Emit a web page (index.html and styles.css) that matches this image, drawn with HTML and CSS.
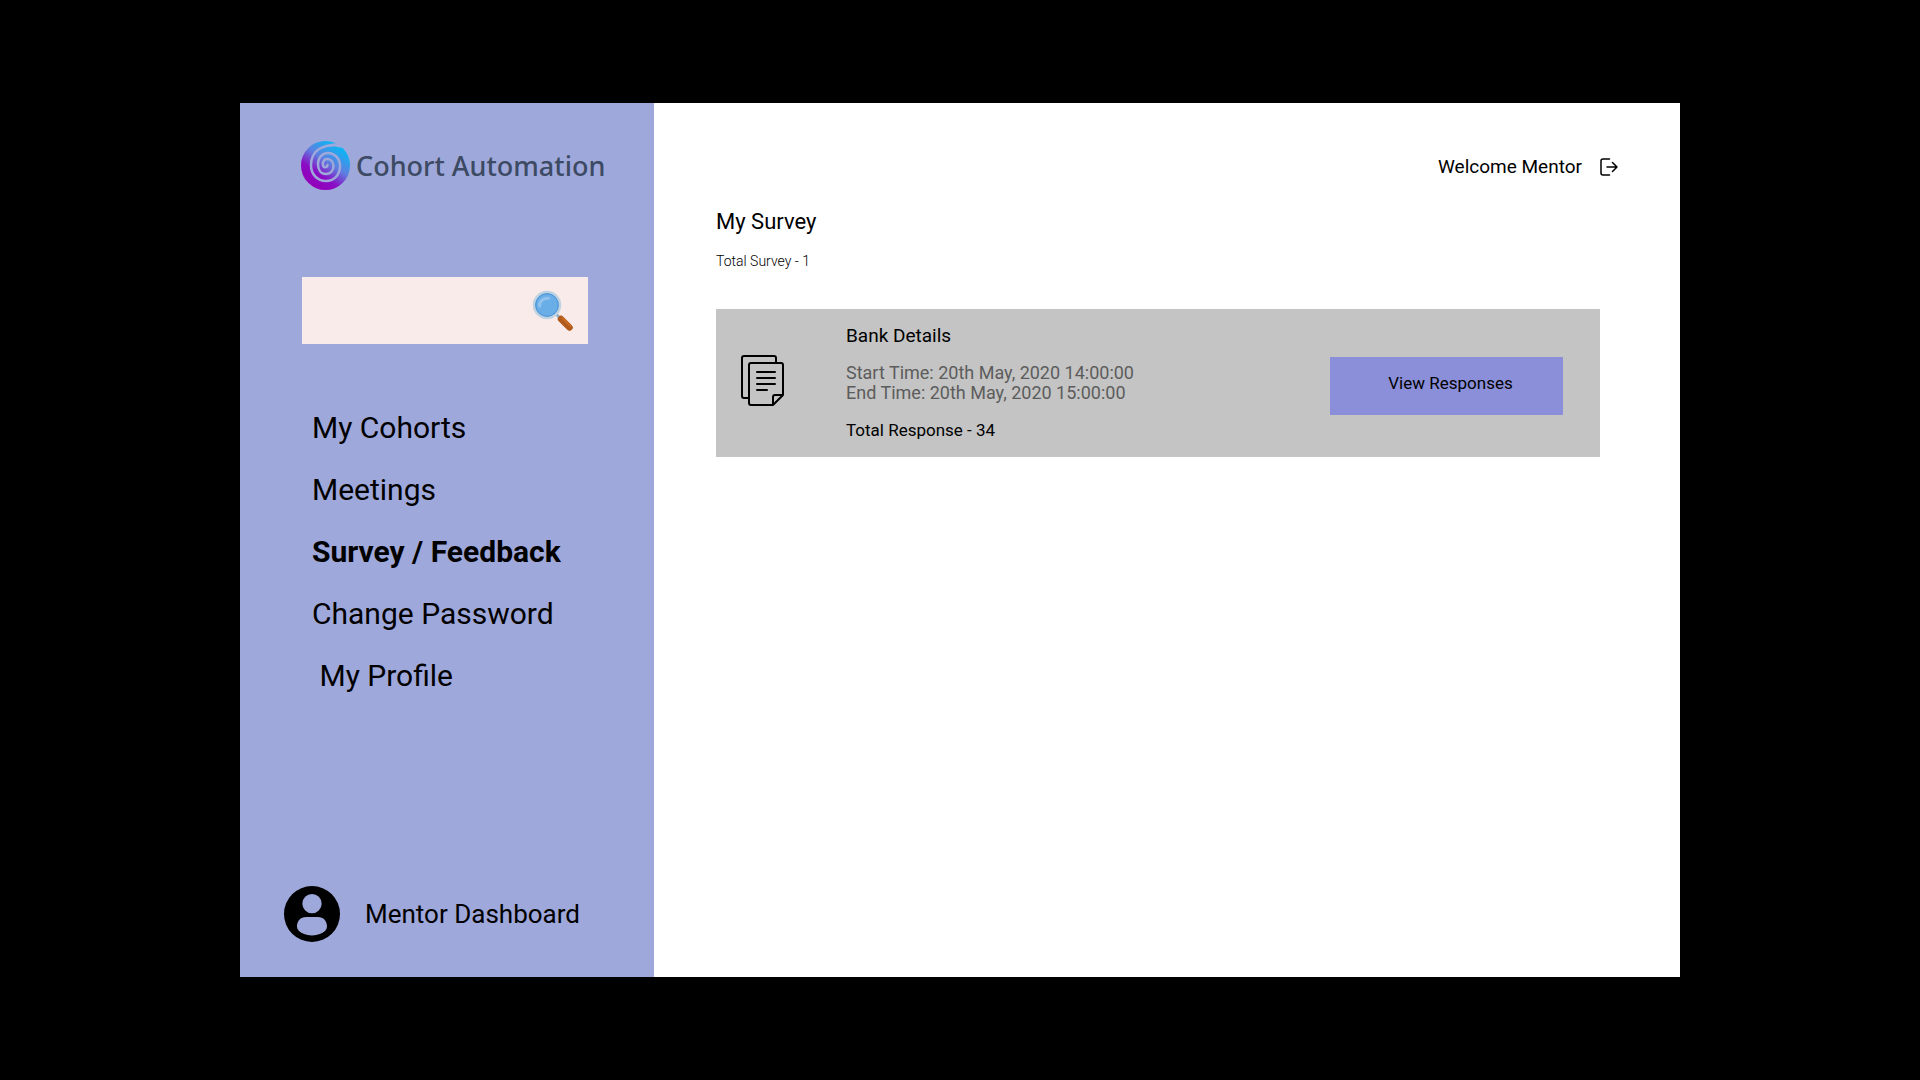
FILE: index.html
```html
<!DOCTYPE html>
<html lang="en">
<head>
<meta charset="utf-8">
<meta name="viewport" content="width=device-width, initial-scale=1">
<title>Cohort Automation - My Survey</title>
<link rel="stylesheet" href="styles.css">
</head>
<body>
<div class="app">
  <aside class="sidebar">
    <div class="brand">
      <svg class="brand-mark" viewBox="0 0 49 49" aria-hidden="true">
        <defs>
          <linearGradient id="swirl" x1="0.25" y1="0.95" x2="0.8" y2="0.15">
            <stop offset="0" stop-color="#9400b8"/>
            <stop offset="0.3" stop-color="#8a0cc4"/>
            <stop offset="0.62" stop-color="#5f7fe0"/>
            <stop offset="1" stop-color="#0cb4f4"/>
          </linearGradient>
        </defs>
        <circle cx="24.500" cy="24.500" r="24.500" fill="url(#swirl)"/>
        <path class="brand-notch" d="M33 1 C36 2 38 3 49 12 V-2 H33 Z M38 2.500 C33 3.500 29 4 26 6 C32 5 36 5.500 41 7 Z"/>
        <path class="brand-groove" d="M38 3 C30 4 24 4 18 8 C12 12 10 18 10 24 C10 33 16 40 25 40 C34 40 39 33 39 25 C39 17 33 12 27 12 C21 12 17 17 17 23 C17 29 20 33 25 33 C30 33 32.500 29 32.500 25 C32.500 20 29 18 26 18 C23 18 21.500 21 22 24 C22.500 27 26 27 26.500 24"/>
      </svg>
      <span class="brand-name">Cohort Automation</span>
    </div>
    <form class="search" role="search">
      <input class="search-input" type="search" aria-label="Search">
      <button class="search-button" type="button" aria-label="Search">
        <svg viewBox="0 0 44 44" aria-hidden="true">
          <path d="M24 24 L30 30" stroke="#8fb0c8" stroke-width="3"/>
          <path d="M30 30 L38.500 38.500" stroke="#b05a1c" stroke-width="6.500" stroke-linecap="round"/>
          <path d="M31.500 29 L39.500 37" stroke="#c8691f" stroke-width="2" stroke-linecap="round"/>
          <circle cx="16" cy="16" r="13" fill="#6aaee8" stroke="#bfd2e0" stroke-width="2.500"/>
          <circle cx="16" cy="16" r="11.300" fill="none" stroke="#4d93d6" stroke-width="1"/>
          <path d="M8.500 17 C8.500 12 12 8.800 17.500 9.200" fill="none" stroke="#92c3ee" stroke-width="3" stroke-linecap="round"/>
        </svg>
      </button>
    </form>
    <nav class="menu" aria-label="Main">
      <a class="menu-link" href="#cohorts">My Cohorts</a>
      <a class="menu-link" href="#meetings">Meetings</a>
      <a class="menu-link menu-link-active" href="#survey" aria-current="page">Survey / Feedback</a>
      <a class="menu-link" href="#password">Change Password</a>
      <a class="menu-link" href="#profile">&nbsp;My Profile</a>
    </nav>
    <div class="account">
      <svg class="avatar" viewBox="0 0 56 56" aria-hidden="true">
        <path fill-rule="evenodd" d="M28 0 A28 28 0 1 0 28 56 A28 28 0 1 0 28 0 Z M28 8 A9.500 9.500 0 1 1 28 27.300 A9.500 9.500 0 1 1 28 8 Z M22 31 H34 C39.500 31 43 35 43 40.500 C43 46 35 49.500 28 49.500 C21 49.500 13 46 13 40.500 C13 35 16.500 31 22 31 Z"/>
      </svg>
      <span class="account-name">Mentor Dashboard</span>
    </div>
  </aside>
  <main class="content">
    <header class="topbar">
      <span class="welcome">Welcome Mentor</span>
      <button class="logout" type="button" aria-label="Log out">
        <svg viewBox="0 0 18 18" aria-hidden="true">
          <path d="M9.500 1 H3 Q1 1 1 3 V15 Q1 17 3 17 H9.500 M7 9 H17 M12.500 4.500 L17 9 L12.500 13.500"/>
        </svg>
      </button>
    </header>
    <h1 class="page-title">My Survey</h1>
    <p class="page-count">Total Survey - 1</p>
    <article class="survey">
      <svg class="survey-icon" viewBox="0 0 43 51" aria-hidden="true">
        <path d="M8 43 H3 Q1 43 1 41 V3 Q1 1 3 1 H33 Q35 1 35 3 V8"/>
        <path d="M10 8 H40 Q42 8 42 10 V40 L32 50 H10 Q8 50 8 48 V10 Q8 8 10 8 Z M32 50 V42 Q32 40 34 40 H42"/>
        <path d="M16 17 H34 M16 23 H34 M16 29 H34 M16 35 H26"/>
      </svg>
      <div class="survey-body">
        <h2 class="survey-title">Bank Details</h2>
        <p class="survey-times">Start Time: 20th May, 2020 14:00:00<br>End Time: 20th May, 2020 15:00:00</p>
        <p class="survey-total">Total Response - 34</p>
      </div>
      <button class="survey-button" type="button">View Responses</button>
    </article>
  </main>
</div>
</body>
</html>
```
FILE: styles.css
```css
* {
  box-sizing: border-box;
}

body {
  margin: 0;
  min-height: 100vh;
  padding: 103px 12.5%;
  display: flex;
  background: #000;
  color: #000;
  font-family: Roboto, "Liberation Sans", sans-serif;
}

h1,
h2,
p {
  margin: 0;
  font-weight: 400;
}

button {
  padding: 0;
  border: 0;
  background: none;
  color: inherit;
  font-family: inherit;
  cursor: pointer;
}

svg {
  display: block;
}

.app {
  flex: 1;
  display: flex;
  background: #fff;
}

.sidebar {
  flex: 0 0 414px;
  min-width: 0;
  display: flex;
  flex-direction: column;
  padding: 38px 44px 35px;
  background: #9fa8da;
}

.brand {
  display: flex;
  align-items: center;
  gap: 6px;
  margin-left: 17px;
}

.brand-mark {
  flex: none;
  width: 49px;
  height: 49px;
}

.brand-groove {
  fill: none;
  stroke: #9fa8da;
  stroke-width: 2.5;
  stroke-linecap: round;
}

.brand-notch {
  fill: #9fa8da;
}

.brand-name {
  color: #3c4a63;
  font-family: "Noto Sans", sans-serif;
  font-size: 27px;
  font-weight: 500;
  line-height: 36px;
  white-space: nowrap;
}

.search {
  display: flex;
  width: 286px;
  height: 67px;
  margin: 87px 0 0 18px;
  background: #faebeb;
}

.search-input {
  flex: 1;
  min-width: 0;
  padding: 0 16px;
  border: 0;
  background: none;
  font: inherit;
}

.search-button {
  width: 44px;
  height: 44px;
  margin: 12px 13px 0 0;
}

.menu {
  display: flex;
  flex-direction: column;
  align-items: flex-start;
  gap: 26px;
  margin: 66px 0 40px 28px;
}

.menu-link {
  color: inherit;
  font-size: 30px;
  line-height: 36px;
  text-decoration: none;
  white-space: nowrap;
}

.menu-link-active {
  font-weight: 700;
}

.account {
  display: flex;
  align-items: center;
  gap: 25px;
  margin-top: auto;
}

.avatar {
  width: 56px;
  height: 56px;
}

.account-name {
  font-size: 26px;
  line-height: 36px;
}

.content {
  flex: 1;
  min-width: 0;
  padding: 51px 62px;
}

.topbar {
  display: flex;
  justify-content: flex-end;
  align-items: center;
  gap: 18px;
}

.welcome {
  font-size: 19px;
  line-height: 26px;
}

.logout {
  width: 18px;
  height: 18px;
}

.logout path {
  fill: none;
  stroke: #000;
  stroke-width: 1.5;
  stroke-linecap: round;
  stroke-linejoin: round;
}

.page-title {
  margin-top: 28px;
  font-size: 22px;
  line-height: 28px;
}

.page-count {
  margin-top: 15px;
  font-size: 14px;
  font-weight: 300;
  line-height: 20px;
}

.survey {
  display: flex;
  align-items: center;
  margin: 38px 18px 0 0;
  padding: 15px 37px 15px 25px;
  background: #c4c4c4;
}

.survey-icon {
  flex: none;
  width: 43px;
  height: 51px;
  margin-bottom: 6px;
}

.survey-icon path {
  fill: none;
  stroke: #000;
  stroke-width: 2;
  stroke-linecap: round;
  stroke-linejoin: round;
}

.survey-body {
  flex: 1;
  display: flex;
  flex-direction: column;
  gap: 15px;
  margin-left: 62px;
}

.survey-title {
  font-size: 19px;
  line-height: 24px;
}

.survey-times {
  color: #5c5c5c;
  font-size: 18px;
  line-height: 20px;
}

.survey-total {
  font-size: 17px;
  line-height: 24px;
}

.survey-button {
  width: 233px;
  height: 58px;
  margin-top: 6px;
  padding: 0 0 6px 8px;
  background: #8b8fd9;
  font-size: 17px;
  line-height: 24px;
}
```
